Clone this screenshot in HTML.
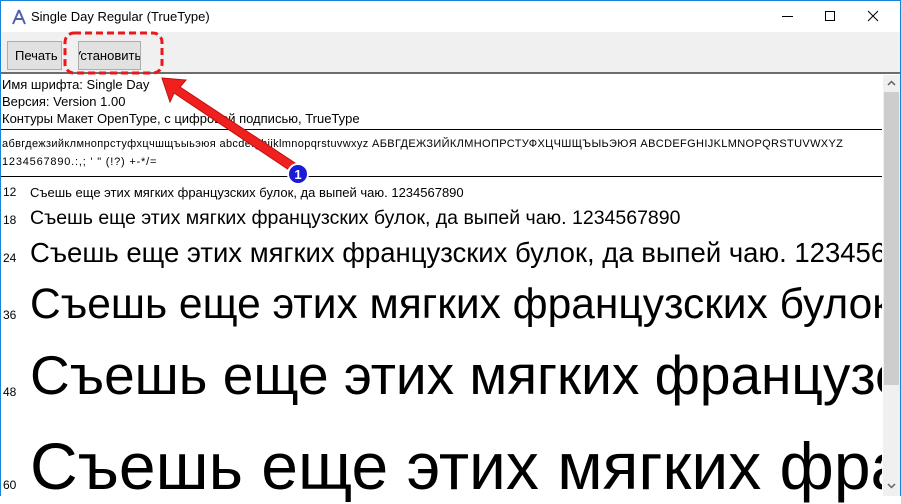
<!DOCTYPE html>
<html><head><meta charset="utf-8"><style>
*{margin:0;padding:0;box-sizing:border-box}
body{width:901px;height:496px;overflow:hidden;background:#fff;font-family:"Liberation Sans",sans-serif;position:relative}
.frame{position:absolute;inset:0;border:1px solid #1883d7;border-bottom:none}
.t{position:absolute;white-space:nowrap;color:#000}
.tb{position:absolute;left:1px;right:1px;top:32px;height:42px;background:#f0f0f0;border-bottom:2px solid #6d6d6d}
.btn{position:absolute;top:9px;height:29px;background:#e1e1e1;border:1px solid #adadad;font-size:13px;line-height:27px;padding:0 7px;overflow:hidden}
.hr{position:absolute;left:1px;width:881px;height:1px;background:#000}
.sb{position:absolute;left:883px;top:75px;width:17px;height:421px;background:#f0f0f0}
.lbl{position:absolute;left:3px;font-size:12px}
.s{position:absolute;left:30px;white-space:nowrap;overflow:hidden;width:852px}
</style></head><body>
<div class="frame"></div>
<svg style="position:absolute;left:11px;top:9px" width="16" height="16" viewBox="0 0 16 16"><path d="M8 1 L2 15 M8 1 L14 15 M4 10 H12" stroke="#5060b0" stroke-width="2" fill="none"/></svg>
<div class="t" style="left:31px;top:9px;font-size:13px">Single Day Regular (TrueType)</div>
<div style="position:absolute;left:782px;top:16px;width:11px;height:1px;background:#000"></div>
<div style="position:absolute;left:825px;top:11px;width:10px;height:10px;border:1px solid #000"></div>
<svg style="position:absolute;left:867px;top:10px" width="12" height="12"><path d="M1 1L11 11M11 1L1 11" stroke="#000" stroke-width="1"/></svg>
<div class="tb">
<div class="btn" style="left:6px;width:55px">Печать</div>
<div class="btn" style="left:77px;width:63px;padding:0;text-indent:-6px">Установить</div>
</div>
<div class="t" style="left:2px;top:77px;font-size:13px">Имя шрифта: Single Day</div>
<div class="t" style="left:2px;top:94px;font-size:13px">Версия: Version 1.00</div>
<div class="t" style="left:2px;top:111px;font-size:13px">Контуры Макет OpenType, с цифровой подписью, TrueType</div>
<div class="hr" style="top:129px"></div>
<div class="t" style="left:2px;top:138px;font-size:11px;letter-spacing:0.35px">абвгдежзийклмнопрстуфхцчшщъыьэюя abcdefghijklmnopqrstuvwxyz АБВГДЕЖЗИЙКЛМНОПРСТУФХЦЧШЩЪЫЬЭЮЯ ABCDEFGHIJKLMNOPQRSTUVWXYZ</div>
<div class="t" style="left:2px;top:156px;font-size:11px;letter-spacing:0.8px">1234567890.:,; ' " (!?) +-*/=</div>
<div class="hr" style="top:176px"></div>
<div class="lbl" style="top:185px">12</div><div class="s" style="top:185px;font-size:13px">Съешь еще этих мягких французских булок, да выпей чаю. 1234567890</div>
<div class="lbl" style="top:213px">18</div><div class="s" style="top:207px;font-size:19.5px">Съешь еще этих мягких французских булок, да выпей чаю. 1234567890</div>
<div class="lbl" style="top:251px">24</div><div class="s" style="top:237px;font-size:27.5px">Съешь еще этих мягких французских булок, да выпей чаю. 1234567890</div>
<div class="lbl" style="top:308px">36</div><div class="s" style="top:281px;font-size:42.5px">Съешь еще этих мягких французских булок</div>
<div class="lbl" style="top:385px">48</div><div class="s" style="top:343px;font-size:55px">Съешь еще этих мягких французских</div>
<div class="lbl" style="top:478px">60</div><div class="s" style="top:428px;font-size:66px">Съешь еще этих мягких французских</div>
<div class="sb"><div style="position:absolute;left:1px;top:17px;width:15px;height:293px;background:#cdcdcd"></div>
<svg style="position:absolute;left:4px;top:5px" width="9" height="6"><path d="M1 5L4.5 1.5L8 5" stroke="#606060" fill="none" stroke-width="1.5"/></svg>
<svg style="position:absolute;left:4px;top:408px" width="9" height="6"><path d="M1 1L4.5 4.5L8 1" stroke="#606060" fill="none" stroke-width="1.5"/></svg></div>
<svg style="position:absolute;left:0;top:0" width="901" height="496">
<rect x="65" y="33" width="97" height="40" rx="9" fill="none" stroke="#e8191e" stroke-width="3" stroke-dasharray="7,4"/>
<polygon points="162,78 186,80 180,87 295,163 289,170 174,93 170,102" fill="#f0201e" stroke="#c01010" stroke-width="1"/>
<circle cx="298" cy="174" r="10" fill="#1a1ad8" stroke="#fff" stroke-width="2"/>
<text x="298" y="179" font-family="Liberation Sans" font-weight="bold" font-size="13" fill="#fff" text-anchor="middle">1</text>
</svg>
</body></html>
